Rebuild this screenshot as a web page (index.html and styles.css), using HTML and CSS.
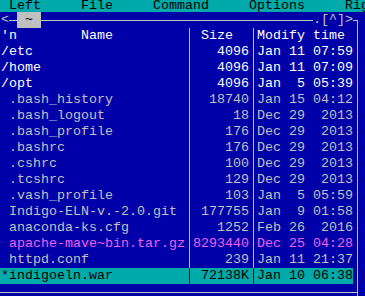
FILE: index.html
```html
<!DOCTYPE html>
<html lang="en">

<head>
  <meta charset="UTF-8" />
  <meta name="viewport" content="width=device-width, initial-scale=1.0" />
  <title>mc</title>
  <link rel="stylesheet" href="styles.css">
</head>

<body>
  <div class="menu"> Left     File     Command     Options     Rig</div>

  <div class="panel">
    <div class="title">
      <span class="ch">&lt;</span>
      <span class="hline short"></span>
      <span class="path"> ~ </span>
      <span class="hline grow"></span>
      <span class="tools">.[^]&gt;</span>
      <span class="corner"></span>
    </div>

    <div class="row head">
      <span class="name">'n        Name</span><span class="sep"></span><span class="size"> Size  </span><span class="sep"></span><span class="date">Modify time</span><span class="edge"></span>
    </div>

    <div id="files"></div>

    <div class="bottom">
      <span class="hline grow"></span>
      <span class="tee"></span>
    </div>
  </div>

  <script>
    const files = [
      ["dir", "/etc", "4096", "Jan 11 07:59"],
      ["dir", "/home", "4096", "Jan 11 07:09"],
      ["dir", "/opt", "4096", "Jan  5 05:39"],
      ["file", " .bash_history", "18740", "Jan 15 04:12"],
      ["file", " .bash_logout", "18", "Dec 29  2013"],
      ["file", " .bash_profile", "176", "Dec 29  2013"],
      ["file", " .bashrc", "176", "Dec 29  2013"],
      ["file", " .cshrc", "100", "Dec 29  2013"],
      ["file", " .tcshrc", "129", "Dec 29  2013"],
      ["file", " .vash_profile", "103", "Jan  5 05:59"],
      ["file", " Indigo-ELN-v.-2.0.git", "177755", "Jan  9 01:58"],
      ["file", " anaconda-ks.cfg", "1252", "Feb 26  2016"],
      ["arch", " apache-mave~bin.tar.gz", "8293440", "Dec 25 04:28"],
      ["file", " httpd.conf", "239", "Jan 11 21:37"],
      ["sel", "*indigoeln.war", "72138K", "Jan 10 06:38"]
    ];

    document.getElementById('files').innerHTML = files.map(([tipo, nome, tam, data]) => `
      <div class="row ${tipo}">
        <span class="name">${nome}</span><span class="sep"></span><span class="size">${tam}</span><span class="sep"></span><span class="date">${data}</span><span class="edge"></span>
      </div>`).join('');
  </script>
</body>

</html>
```

FILE: styles.css
```css
:root {
  --blue: #0000a8;
  --cyan: #00aaaa;
  --gray: #c0c0c0;
  --white: #ffffff;
  --magenta: #f060f0;
  --line: #c0c0c0;
}

body {
  margin: 0;
  width: 365px;
  height: 296px;
  overflow: hidden;
  background-color: var(--blue);
  color: var(--gray);
  font-family: 'Liberation Mono', monospace;
  font-size: 13.333px;
}

.menu {
  height: 12px;
  line-height: 12px;
  padding-left: 1px;
  background-color: var(--cyan);
  color: #000;
  white-space: pre;
}

.panel {
  width: 361px;
}

.title,
.bottom {
  display: flex;
  height: 16px;
  line-height: 16px;
}

.title {
  padding-left: 1px;
}

.ch {
  width: 8px;
}

.hline {
  background: linear-gradient(var(--line), var(--line)) no-repeat 0 8px / 100% 1px;
}

.hline.short {
  width: 8px;
}

.hline.grow {
  flex: 1;
}

.path {
  width: 24px;
  white-space: pre;
  background-color: var(--gray);
  color: #000;
}

.tools {
  width: 40px;
  white-space: pre;
  color: var(--line);
}

.corner {
  width: 8px;
  background-image: linear-gradient(var(--line), var(--line)), linear-gradient(var(--line), var(--line));
  background-repeat: no-repeat;
  background-position: 0 8px, 4px 8px;
  background-size: 5px 1px, 1px 8px;
}

.row {
  display: grid;
  grid-template-columns: 185px 8px 56px 8px 96px 8px;
  height: 16px;
  line-height: 16px;
  white-space: pre;
}

.row .name {
  padding-left: 1px;
  overflow: hidden;
}

.row .size {
  text-align: right;
}

.sep,
.edge,
.tee {
  background-image: linear-gradient(var(--line), var(--line));
  background-repeat: no-repeat;
  background-position: 4px 0;
  background-size: 1px 100%;
}

.tee {
  width: 8px;
  background-image: linear-gradient(var(--line), var(--line)), linear-gradient(var(--line), var(--line));
  background-position: 4px 0, 0 8px;
  background-size: 1px 100%, 5px 1px;
}

.head,
.dir {
  color: var(--white);
}

.arch {
  color: var(--magenta);
}

.sel {
  color: #000;
}

.sel .name,
.sel .size,
.sel .date,
.sel .sep {
  background-color: var(--cyan);
}

.sel .sep {
  background-image: linear-gradient(#000, #000);
}
```
